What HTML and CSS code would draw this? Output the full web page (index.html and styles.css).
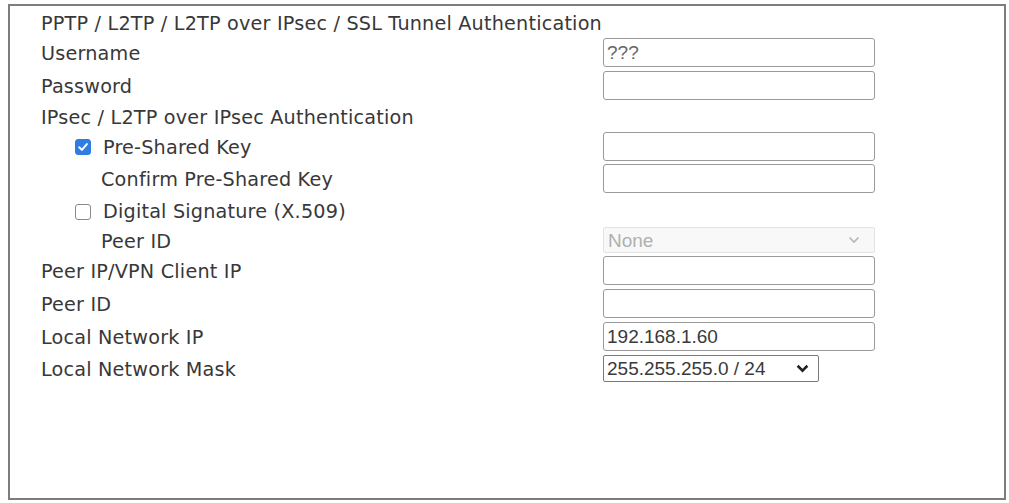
FILE: index.html
```html
<!DOCTYPE html>
<html>
<head>
<meta charset="utf-8">
<link rel="stylesheet" href="styles.css">
</head>
<body>
<div class="frame">
  <div class="row head"><span class="label">PPTP / L2TP / L2TP over IPsec / SSL Tunnel Authentication</span></div>
  <div class="row"><span class="label">Username</span><div class="input">???</div></div>
  <div class="row"><span class="label">Password</span><div class="input"></div></div>
  <div class="row sub"><span class="label">IPsec / L2TP over IPsec Authentication</span></div>
  <div class="row r-psk"><span class="label ind1"><span class="cb checked"><svg viewBox="0 0 14 14" width="14" height="14"><path d="M3.2 7.2 L5.9 9.9 L10.9 4.1" fill="none" stroke="#fff" stroke-width="2" stroke-linecap="round" stroke-linejoin="round"/></svg></span><span class="cbtext">Pre-Shared Key</span></span><div class="input"></div></div>
  <div class="row"><span class="label ind2">Confirm Pre-Shared Key</span><div class="input"></div></div>
  <div class="row r-dig"><span class="label ind1"><span class="cb"></span><span class="cbtext">Digital Signature (X.509)</span></span></div>
  <div class="row r-sel"><span class="label ind2">Peer ID</span><div class="select disabled"><span>None</span><svg viewBox="0 0 12 8" width="12" height="8"><path d="M1.5 1.5 L6 6 L10.5 1.5" fill="none" stroke="#b5b5b5" stroke-width="1.6"/></svg></div></div>
  <div class="row"><span class="label">Peer IP/VPN Client IP</span><div class="input"></div></div>
  <div class="row"><span class="label">Peer ID</span><div class="input"></div></div>
  <div class="row"><span class="label">Local Network IP</span><div class="input dark">192.168.1.60</div></div>
  <div class="row r-mask"><span class="label">Local Network Mask</span><div class="select mask"><span>255.255.255.0 / 24</span><svg viewBox="0 0 12 8" width="13" height="9"><path d="M1.5 1.5 L6 6 L10.5 1.5" fill="none" stroke="#222" stroke-width="2.4"/></svg></div></div>
</div>
</body>
</html>
```

FILE: styles.css
```css
html, body {
  margin: 0;
  padding: 0;
  background: #ffffff;
}
body {
  font-family: "DejaVu Sans", sans-serif;
  font-size: 19.2px;
  letter-spacing: 0.2px;
  color: #383838;
}
.frame {
  box-sizing: border-box;
  margin: 4px 0 0 8px;
  width: 998px;
  height: 496px;
  border: 2px solid #7d7d7d;
  padding: 3px 0 0 31px;
}
.row {
  display: flex;
  align-items: center;
  height: 33px;
}
.row.head { height: 27px; }
.row.sub { height: 28px; }
.row.r-psk { height: 32px; }
.row.r-dig { height: 31px; }
.row.r-sel { height: 28px; }
.row.r-mask { height: 31px; }
.label {
  width: 562px;
  flex: none;
  display: flex;
  align-items: center;
  white-space: nowrap;
  padding-top: 2px;
}
.ind1 { padding-left: 34px; box-sizing: border-box; }
.ind2 { padding-left: 60px; box-sizing: border-box; }
.cb {
  box-sizing: border-box;
  width: 16px;
  height: 16px;
  border: 1.5px solid #8a8a8a;
  border-radius: 3px;
  background: #fff;
  display: inline-flex;
  align-items: center;
  justify-content: center;
  flex: none;
}
.cb.checked {
  background: #2f7de1;
  border-color: #2f7de1;
}
.cbtext { margin-left: 12px; }
.input {
  box-sizing: border-box;
  width: 272px;
  height: 29px;
  border: 1.5px solid #9a9a9a;
  border-radius: 3px;
  background: #fff;
  font-family: "Liberation Sans", Arial, sans-serif;
  font-size: 19px;
  letter-spacing: 0;
  color: #666;
  padding: 0 3px;
  display: flex;
  align-items: center;
  line-height: 1;
}
.input.dark { color: #3a3a3a; }
.select {
  box-sizing: border-box;
  height: 26px;
  display: flex;
  align-items: center;
  justify-content: space-between;
  font-family: "Liberation Sans", Arial, sans-serif;
  font-size: 19px;
  letter-spacing: 0;
  line-height: 1;
}
.select.disabled {
  width: 272px;
  border: 1px solid #e3e3e3;
  border-radius: 2px;
  background: #f8f8f8;
  color: #b0b0b0;
  padding: 0 14px 0 4px;
}
.select.mask {
  width: 216px;
  height: 27px;
  border: 1.5px solid #7a7a7a;
  border-radius: 2px;
  background: #fff;
  color: #3a3a3a;
  padding: 0 9px 0 3px;
}
```
